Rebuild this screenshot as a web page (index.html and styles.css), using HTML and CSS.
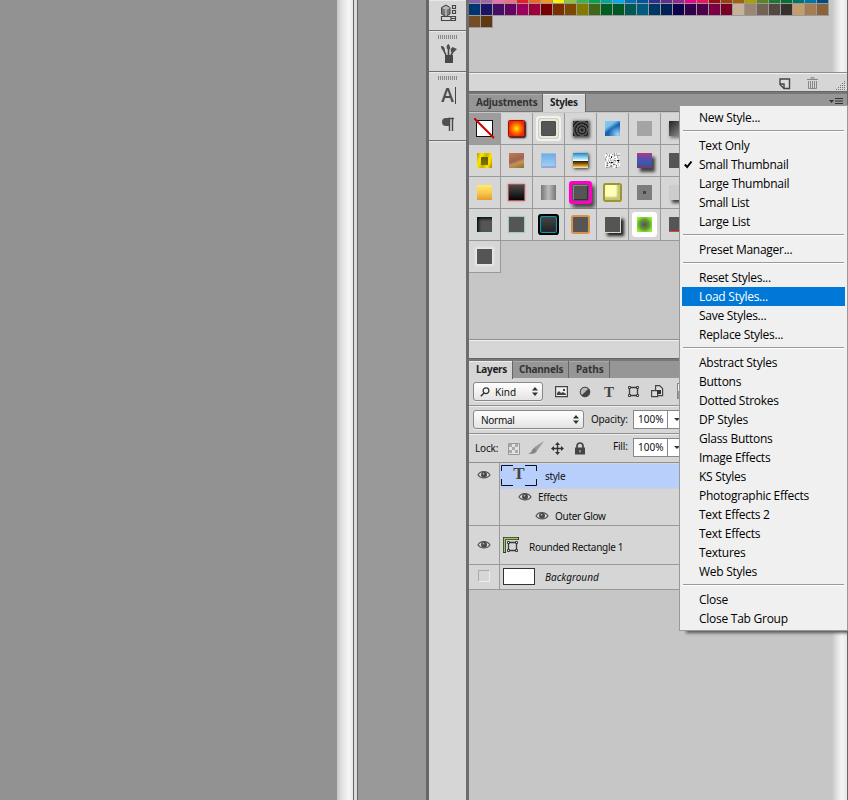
FILE: index.html
```html
<!DOCTYPE html>
<html lang="en">
<head>
<meta charset="utf-8">
<title>Styles panel</title>
<link rel="stylesheet" href="styles.css">
</head>
<body>
<svg class="defs" width="0" height="0">
  <symbol id="eye" viewBox="0 0 14 10"><path d="M1 5C3 1 10 0 13 5C10 9 4 9 1 5Z" fill="#ddd" stroke="#555" stroke-width="1.2"/><circle cx="7" cy="4.700" r="3" fill="#4b4b4b"/><circle cx="6.500" cy="3.800" r=".8" fill="#ccc"/></symbol>
  <symbol id="updown" viewBox="0 0 6 9"><path d="M0 3.500L3 0L6 3.500ZM0 5.500L3 9L6 5.500Z" fill="#333"/></symbol>
  <symbol id="shape" viewBox="0 0 13 13"><path d="M2.500 3V10M10.500 3V10M3 2.500H10M3 10.500H10" fill="none" stroke="#3c3c3c" stroke-width="1.300"/><path d="M1.500 1.500h2v2h-2zM9.500 1.500h2v2h-2zM1.500 9.500h2v2h-2zM9.500 9.500h2v2h-2z" fill="#ddd" stroke="#3c3c3c"/></symbol>
</svg>
<main class="app">
  <section class="canvas"></section>
  <div class="canvas-scroll"></div>
  <div class="canvas-edge"></div>
  <div class="gap"></div>
  <nav class="dock">
    <div class="dock-group first">
      <svg width="18" height="18"><path d="M1.500 3.500L6 1l4 2.500V10L6 12.500 1.500 10Z" fill="#777" stroke="#444"/><path d="M2 4l4 2 4-2-4-2Z" fill="#bbb"/><path d="M6 6v6" stroke="#ddd"/><path d="M12.500 1.500h3v3h-3zM12.500 6.500h3v3h-3zM1.500 12.500h14v4h-14zM11 13v3M11 14.500h4" fill="none" stroke="#444" stroke-width="1.200"/></svg>
    </div>
    <div class="dock-group brushes"><i class="grip"></i>
      <svg width="18" height="20"><path d="M6 11L3 5M8.500 11V4M11 11l3-5" stroke="#444" stroke-width="1.600"/><path d="M1 2c3 0 4 2 4 5C2 6 1 5 1 2ZM7 5c-1-3 0-4 1.500-5 2 2 1.500 4 1.500 5ZM10.500 5l2-2 4.500 2-3 3-3 0Z" fill="#505050"/><path d="M5 11h8v8H5z" fill="#484848"/></svg>
    </div>
    <div class="dock-group type"><i class="grip"></i>
      <div class="char">A</div>
      <svg width="14" height="15" class="para"><path d="M7 1.500H13M8.500 1v13M11.500 1v13" stroke="#484848" stroke-width="1.400" fill="none"/><path d="M8 1H5a4 4 0 0 0 0 8h3Z" fill="#505050"/></svg>
    </div>
    <div class="dock-rest"></div>
  </nav>
  <section class="panels">
    <div class="swatches">
      <div class="swatch-grid" id="swatches"></div>
      <div class="vscroll"></div>
    </div>
    <div class="panel-foot">
      <svg width="12" height="12" class="new"><path d="M1 1h9.500v9.500H5L1 6.500Z" fill="#ddd" stroke="#444" stroke-width="1.400"/><path d="M1 6h4v4" fill="none" stroke="#444" stroke-width="1.400"/></svg>
      <svg width="12" height="12" class="trash"><path d="M0 2.500h11M4 2V.7h3V2" fill="none" stroke="#888"/><path d="M1.500 4v7.500h8V4M3.500 4v7M5.500 4v7M7.500 4v7" fill="none" stroke="#888"/></svg>
      <svg width="10" height="10" class="resize"><path d="M8 .5h1M6 2.500h3M4 4.500h5M2 6.500h7M0 8.500h9" stroke="#777" stroke-dasharray="1 1"/></svg>
    </div>
    <div class="tabs styles-tabs">
      <span class="tab adjustments">Adjustments</span><span class="tab on styles-tab">Styles</span>
      <svg class="flyout" width="14" height="7"><path d="M0 2h5L2.500 5Z" fill="#333"/><path d="M6 .5h8M6 3h8M6 5.500h8" stroke="#333"/></svg>
    </div>
    <div class="styles-body">
      <div class="style-grid">
        <div class="cell picked"><i class="none"><svg width="21" height="21"><path d="M0 0L20 20" stroke="#d00000" stroke-width="2"/></svg></i></div>
        <div class="cell"><i class="t fire"></i></div>
        <div class="cell"><i class="t halo"></i></div>
        <div class="cell"><i class="t rings"></i></div>
        <div class="cell"><i class="t bluegem"></i></div>
        <div class="cell"><i class="t light"></i></div>
        <div class="cell"><i class="t darkfade"></i></div>
        <div class="cell"><i class="t gold"></i></div>
        <div class="cell"><i class="t rust"></i></div>
        <div class="cell"><i class="t sky"></i></div>
        <div class="cell"><i class="t chrome"></i></div>
        <div class="cell"><i class="t noise"><svg width="15" height="15"><filter id="n"><feTurbulence type="fractalNoise" baseFrequency=".55" numOctaves="2" seed="3"/><feColorMatrix values="3 0 0 0 -.8 3 0 0 0 -.8 3 0 0 0 -.8 0 0 0 0 1"/></filter><rect width="15" height="15" filter="url(#n)"/></svg></i></div>
        <div class="cell"><i class="t dusk"></i></div>
        <div class="cell"><i class="t"></i></div>
        <div class="cell"><i class="t amber"></i></div>
        <div class="cell"><i class="t ember"></i></div>
        <div class="cell"><i class="t steel"></i></div>
        <div class="cell"><i class="t magenta"></i></div>
        <div class="cell"><i class="t cream"></i></div>
        <div class="cell"><i class="t dot"></i></div>
        <div class="cell"><i class="t pale"></i></div>
        <div class="cell"><i class="t inset"></i></div>
        <div class="cell"><i class="t aqua"></i></div>
        <div class="cell"><i class="t neon"></i></div>
        <div class="cell"><i class="t orange"></i></div>
        <div class="cell"><i class="t drop"></i></div>
        <div class="cell"><i class="t green"></i></div>
        <div class="cell"><i class="t redline"></i></div>
        <div class="cell last"><i class="t glow"></i></div>
      </div>
    </div>
    <div class="panel-foot plain"></div>
    <div class="tabs layer-tabs">
      <span class="tab on layers-tab">Layers</span><span class="tab channels">Channels</span><span class="tab paths">Paths</span>
    </div>
    <div class="bar filter">
      <div class="select kind"><svg width="10" height="10"><circle cx="6" cy="3.700" r="2.900" fill="none" stroke="#333" stroke-width="1.300"/><path d="M4 6L.8 9.200" stroke="#333" stroke-width="1.500"/></svg><span>Kind</span><svg class="ud" width="6" height="9"><use href="#updown"/></svg></div>
      <div class="filter-icons">
        <svg width="13" height="12"><path d="M.6.6h11.800v10H.6z" fill="#eee" stroke="#444" stroke-width="1.200"/><path d="M2 9V7l2-2 2 2 2-1 3 2v1ZM8 3h2v2H8z" fill="#444"/></svg>
        <svg width="12" height="12"><circle cx="6" cy="6" r="5" fill="#444"/><path d="M2.700 9.300A4.600 4.600 0 0 1 9.300 2.700Z" fill="#bbb"/><circle cx="6" cy="6" r="4.800" fill="none" stroke="#444"/></svg>
        <b class="tee">T</b>
        <svg width="13" height="13"><use href="#shape"/></svg>
        <svg width="13" height="13"><path d="M4.600.6h4l3 3v7h-7z" fill="#ddd" stroke="#444" stroke-width="1.200"/><path d="M.6 5.600h6v6h-6z" fill="#ddd" stroke="#444" stroke-width="1.200"/><path d="M6 5h4v4H6z" fill="#333"/></svg>
      </div>
      <i class="toggle"></i>
    </div>
    <div class="bar blend">
      <div class="select mode"><span>Normal</span><svg class="ud" width="6" height="9"><use href="#updown"/></svg></div>
      <span class="opacity">Opacity:</span><div class="num"><b>100%</b><i></i></div>
    </div>
    <div class="bar lock">
      <span class="lock-label">Lock:</span>
      <svg width="12" height="12" class="checker"><path d="M.5.5h11v11H.5z" fill="#e3e3e3" stroke="#999"/><path d="M1 1h3v3H1zM7 1h3v3H7zM4 4h3v3H4zM1 7h3v3H1zM7 7h3v3H7z" fill="#aaa"/></svg>
      <svg width="16" height="14" class="brush"><path d="M16 0L9.500 9 6 6.500Z" fill="#999"/><path d="M6 7c2 0 3 1 3 3-2 3-5 3-9 3 4-1 3-4 6-6Z" fill="#858585"/></svg>
      <svg width="13" height="13" class="move"><path d="M6.500 2v9M2 6.500h9" stroke="#333" stroke-width="1.300"/><path d="M6.500 0L9 3H4ZM6.500 13L9 10H4ZM0 6.500L3 4v5ZM13 6.500L10 4v5Z" fill="#333"/></svg>
      <svg width="10" height="13" class="padlock"><path d="M2 6V4a3 3 0 0 1 6 0v2" fill="none" stroke="#444" stroke-width="1.700"/><path d="M0 5.500h10v7H0z" fill="#444"/><path d="M4.500 8h1v2.500h-1z" fill="#ccc"/></svg>
      <span class="fill">Fill:</span><div class="num"><b>100%</b><i></i></div>
    </div>
    <div class="layers">
      <div class="layer text-layer">
        <div class="vis"><svg width="14" height="10"><use href="#eye"/></svg></div>
        <div class="info">
          <div class="title"><div class="text-thumb"><b>T</b><svg width="36" height="21"><path d="M.5 6V.5H12M24 .5h11.500V6M35.500 14v6.500H24M12 20.500H.5V14" fill="none" stroke="#111"/></svg></div><span>style</span></div>
          <div class="fx effects"><svg width="14" height="10"><use href="#eye"/></svg><span>Effects</span></div>
          <div class="fx outer"><svg width="14" height="10"><use href="#eye"/></svg><span>Outer Glow</span></div>
        </div>
      </div>
      <div class="layer rect-layer">
        <div class="vis"><svg width="14" height="10"><use href="#eye"/></svg></div>
        <div class="info"><svg width="17" height="17"><path d="M1.500 16V1.500H16" fill="none" stroke="#333" stroke-width="3"/><path d="M1.500 15V1.500H15" fill="none" stroke="#9ccc5a" stroke-width="1.400"/><g transform="translate(3 3)"><use href="#shape" width="13" height="13"/></g></svg><span>Rounded Rectangle 1</span></div>
      </div>
      <div class="layer bg-layer">
        <div class="vis"><i></i></div>
        <div class="info"><i class="white"></i><em>Background</em></div>
      </div>
      <div class="layers-rest"><div class="vscroll"></div></div>
    </div>
  </section>
</main>
<div class="menu">
  <div>New Style...</div>
  <hr>
  <div>Text Only</div>
  <div class="checked"><svg width="9" height="9"><path d="M.8 4.500L3.200 7 7.500 1.500" fill="none" stroke="#000" stroke-width="2"/></svg>Small Thumbnail</div>
  <div>Large Thumbnail</div>
  <div>Small List</div>
  <div>Large List</div>
  <hr>
  <div>Preset Manager...</div>
  <hr>
  <div>Reset Styles...</div>
  <div class="hot">Load Styles...</div>
  <div>Save Styles...</div>
  <div>Replace Styles...</div>
  <hr>
  <div>Abstract Styles</div>
  <div>Buttons</div>
  <div>Dotted Strokes</div>
  <div>DP Styles</div>
  <div>Glass Buttons</div>
  <div>Image Effects</div>
  <div>KS Styles</div>
  <div>Photographic Effects</div>
  <div>Text Effects 2</div>
  <div>Text Effects</div>
  <div>Textures</div>
  <div>Web Styles</div>
  <hr>
  <div>Close</div>
  <div>Close Tab Group</div>
</div>
<script src="script.js"></script>
</body>
</html>
```
FILE: styles.css
```css
* { box-sizing: border-box; }
body { margin: 0; width: 848px; height: 800px; overflow: hidden; position: relative; font: 10px/12px "Noto Sans", sans-serif; color: #111; }
svg { display: block; flex: none; }
.defs { position: absolute; }
i { display: block; font-style: normal; }
.app { display: flex; height: 800px; background: #666; }
.canvas { width: 337px; background: #929292; }
.canvas-scroll { width: 16px; background: linear-gradient(90deg, #c8c8c8, #e4e4e4 35%, #f6f6f6 75%, #e8e8e8); }
.canvas-edge { width: 5px; background: #dcdcdc; border: solid #666; border-width: 0 1px; }
.gap { width: 68px; background: #999; }

.dock { width: 40px; border-left: 3px solid #676767; display: flex; flex-direction: column; background: #d6d6d6; }
.dock-group { border-bottom: 1px solid #707070; box-shadow: inset 0 1px #e9e9e9; display: flex; flex-direction: column; align-items: center; }
.first { height: 31px; padding: 4px 0 0 2px; }
.brushes { height: 41px; padding-top: 4px; }
.type { height: 69px; padding-top: 4px; }
.dock-rest { flex: 1; box-shadow: inset 0 1px #e9e9e9; }
.grip { width: 20px; height: 4px; background: repeating-linear-gradient(90deg, #888 0 1px, #d6d6d6 1px 2px); }
.brushes svg { margin: 5px 0 0 2px; }
.char { font: 600 19px/17px "Open Sans", sans-serif; color: #4b4b4b; border-right: 1px solid #444; height: 17px; margin: 7px 0 0 2px; padding-right: 1px; }
.para { margin: 13px 0 0; }

.panels { width: 382px; border-left: 3px solid #6d6d6d; border-right: 1px solid #666; display: flex; flex-direction: column; background: #d6d6d6; }
.panels > * { flex: none; }
.swatches { height: 72px; background: #c6c6c6; display: flex; justify-content: space-between; }
.swatch-grid { display: grid; grid-template-columns: repeat(30, 12px); grid-template-rows: 4px 12px 12px; align-content: start; }
.swatch-grid i { border: solid #999; border-width: 0 1px 1px 0; }
.vscroll { width: 15px; background: linear-gradient(90deg, #c6c6c6, #e2e2e2 35%, #f5f5f5 65%, #e8e8e8); }
.panel-foot { height: 20px; border-top: 1px solid #8e8e8e; border-bottom: 1px solid #666; box-shadow: inset 0 1px #f1f1f1; display: flex; }
.new { margin: 5px 0 0 310px; }
.trash { margin: 4px 0 0 16px; }
.resize { margin: 8px 0 0 17px; }
.tabs { height: 20px; border-top: 2px solid #777; border-bottom: 1px solid #777; background: #969696; display: flex; font: 700 10px/16px "Noto Sans", sans-serif; color: #333; letter-spacing: -.1px; }
.tab { border-right: 1px solid #666; height: 17px; padding-left: 7px; box-shadow: inset 0 1px #aaa; white-space: nowrap; }
.tab.on { background: #d6d6d6; height: 18px; color: #222; box-shadow: inset 0 1px #eee; }
.adjustments { width: 74px; letter-spacing: -.2px; }
.styles-tab { width: 43px; letter-spacing: -.3px; }
.flyout { margin: 4px 4px 0 auto; }
.styles-body { height: 227px; background: #c6c6c6; padding-top: 1px; }
.style-grid { display: grid; grid-template-columns: repeat(7, 32px); grid-auto-rows: 32px; }
.cell { background: #d6d6d6; border: solid #999; border-width: 0 1px 1px 0; display: flex; align-items: center; justify-content: center; }
.picked { background: #9d9d9d; }
.t { width: 15px; height: 15px; background: #555; }
.none { width: 17px; height: 17px; background: #fff; border: 1px solid #111; position: relative; }
.none svg { position: absolute; left: -3px; top: -3px; }
.fire { border-radius: 1px; background: radial-gradient(circle, #fff000, #ff9000 30%, #f02800 75%); box-shadow: 0 0 0 1px #911, 1px 1px 2px 1px #000; }
.halo { border: 1px solid #4c4c4c; border-radius: 1px; box-shadow: 0 0 0 2px #e8e8e0, 0 0 0 3px #cdcdc3, 0 0 1px 5px #f4f4ea; }
.rings { background: repeating-radial-gradient(circle at 60% 60%, #222 0 1px, #555 2px 3px), #333; box-shadow: 1px 1px 3px 1px #444; }
.bluegem { background: radial-gradient(circle at 85% 90%, #9ad8ff, transparent 50%), linear-gradient(145deg, #8acbf0, #7ac0e8 30%, #1660b0 50%, #1c69b8); }
.light { background: #a4a4a4; }
.darkfade { background: linear-gradient(135deg, #222, #999); box-shadow: 1px 2px 3px #777; }
.gold { background: linear-gradient(#655f00, #7c7200) center/7px 8px no-repeat, linear-gradient(110deg, #b99700, #ffe900 25%, #c6b200 50%, #ffe700 75%, #a98300); }
.rust { background: linear-gradient(160deg, #c47c50, #9c6550 48%, #cc9055 65%, #777733); }
.sky { background: linear-gradient(#69abe4, #a6d4f8); box-shadow: inset 1px 1px #8fbfe9, inset -1px -2px #9aa5df; }
.chrome { background: linear-gradient(#1688cc, #eaffff 50%, #332000 56%, #ba8018 80%, #fff0b0); box-shadow: 1px 1px 3px #333; }
.noise { overflow: hidden; }
.dusk { background: linear-gradient(#b03b75, #604cb0 35%, #315da8 75%, #8a2d70); box-shadow: 3px 4px 3px #444; }
.amber { background: linear-gradient(#ffeb69, #f9cb4e 50%, #e89832); }
.ember { background: linear-gradient(#4b4b4b, #050505); box-shadow: 0 0 0 1px #a55, 0 0 2px 1px #c77; }
.steel { background: linear-gradient(90deg, #777, #bbb 50%, #777); }
.magenta { border-radius: 1px; background: #555; box-shadow: inset 1px 1px #888, inset -1px -1px #333, 0 0 0 1px #555, 0 0 0 4px #ff00c4, 3px 4px 4px 4px #444; }
.cream { background: #ffffb8; box-shadow: inset -3px -3px 2px #c6c478, 0 0 0 2px #9a9632; border-radius: 1px; }
.dot { background: linear-gradient(#444, #444) center/3px 3px no-repeat #7d7d7d; }
.pale { background: #ccc; box-shadow: 3px 3px 3px #444; }
.inset { box-shadow: inset 2px 2px 3px #111, 0 0 2px 2px #ccdad8; }
.aqua { box-shadow: 0 0 1px 1px #9fc9c2; }
.neon { border-radius: 1px; background: linear-gradient(#444, #222); box-shadow: inset 0 0 1px #008ba1, 0 0 0 1px #0799b0, 0 0 0 3px #000; }
.orange { border-radius: 1px; box-shadow: 0 0 0 2px #d9924b; }
.drop { box-shadow: 0 0 0 1px #d6ddc4, 3px 3px 3px 1px #222; }
.green { background: radial-gradient(#555, #66943a 45%, #89f125 80%); box-shadow: 0 0 0 5px #fff; border-radius: 1px; }
.redline { border-bottom: 1px solid #f33; }
.glow { box-shadow: 0 0 2px 2px #e8e8e8; }
.plain { height: 20px; }
.layers-tab { width: 44px; letter-spacing: -.3px; }
.channels { width: 56px; padding-left: 6px; letter-spacing: -.2px; }
.paths { width: 41px; }
.layer-tabs { height: 19px; border-bottom: 0; }

.bar { display: flex; border-bottom: 1px solid #909090; box-shadow: inset 0 1px #eee; white-space: nowrap; }
.filter { height: 28px; box-shadow: none; }
.blend { height: 28px; }
.lock { height: 29px; }
.select { border: 1px solid #888; border-radius: 3px; background: linear-gradient(#fff, #e4e4e4); display: flex; align-items: center; box-shadow: 0 1px #eee; }
.ud { margin-left: auto; margin-right: 4px; }
.kind { width: 70px; height: 19px; margin: 4px 0 0 4px; padding-left: 6px; }
.kind span { margin-left: 5px; }
.mode { width: 111px; height: 19px; margin: 4px 0 0 4px; padding-left: 7px; letter-spacing: -.3px; }
.filter-icons { display: grid; grid-template-columns: repeat(5, 24px); justify-items: center; align-items: center; margin-left: 6px; height: 27px; }
.tee { font: 700 15px/16px "Liberation Serif", serif; color: #444; }
.toggle { width: 8px; height: 16px; margin: 5px 0 0 8px; background: linear-gradient(#eee 50%, #999 50%); border: 1px solid #888; }
.opacity { margin: 7px 0 0 7px; width: 42px; letter-spacing: -.2px; }
.num { width: 60px; height: 19px; margin-top: 4px; border: 1px solid #888; background: #fff; display: flex; }
.num b { width: 34px; padding-left: 4px; font-weight: 400; line-height: 17px; border-right: 1px solid #888; }
.num i { width: 0; height: 0; border: solid transparent; border-width: 3px 3px 0; border-top-color: #333; margin: 7px 0 0 6px; }
.lock-label { margin: 8px 0 0 6px; width: 33px; letter-spacing: -.2px; }
.checker { margin: 9px 0 0; }
.brush { margin: 7px 0 0 8px; }
.move { margin: 8px 0 0 7px; }
.padlock { margin: 8px 0 0 11px; }
.fill { margin: 6px 0 0 28px; width: 20px; letter-spacing: -.2px; }
.layers { height: 338px; display: flex; flex-direction: column; background: #c6c6c6; }
.layer { display: flex; background: #d6d6d6; border-bottom: 1px solid #999; }
.layer span { letter-spacing: -.3px; }
.vis { width: 31px; border-right: 1px solid #999; display: flex; justify-content: center; }
.info { flex: 1; }
.text-layer { height: 63px; }
.text-layer .vis { padding-top: 7px; }
.title { height: 25px; margin-top: 1px; background: #b8cefb; display: flex; border-bottom: 1px solid #c9cfdd; }
.title span { margin: 6px 0 0 8px; }
.text-thumb { width: 36px; height: 21px; margin: 1px 0 0 1px; position: relative; text-align: center; }
.text-thumb b { font: 700 17px/18px "Liberation Serif", serif; color: #444; }
.text-thumb svg { position: absolute; inset: 0; }
.fx { display: flex; align-items: center; height: 16px; }
.effects { padding-left: 18px; }
.outer { padding-left: 35px; height: 21px; }
.fx span { margin-left: 6px; }
.rect-layer { height: 39px; }
.rect-layer .vis { padding-top: 14px; }
.rect-layer .info { display: flex; padding: 11px 0 0 3px; }
.rect-layer span { margin: 4px 0 0 9px; }
.bg-layer { height: 25px; }
.bg-layer .vis i { width: 12px; height: 12px; margin-top: 5px; border: 1px solid; border-color: #aaa #eee #eee #aaa; }
.bg-layer .info { display: flex; }
.white { width: 32px; height: 17px; margin: 3px 0 0 3px; border: 1px solid #333; background: #fff; }
.bg-layer em { margin: 6px 0 0 10px; }
.layers-rest { flex: 1; display: flex; justify-content: flex-end; }

.menu { position: absolute; left: 679px; top: 105px; width: 169px; height: 526px; padding: 2px 2px 0; border: 1px solid #999; background: #f0f0f0; box-shadow: 5px 4px 3px -2px #555; font: 12px/19px "Open Sans", sans-serif; color: #000; }
.menu div { height: 19px; padding-left: 17px; white-space: nowrap; position: relative; letter-spacing: -.26px; }
.menu hr { height: 2px; margin: 3px 1px 4px; border: 0; border-top: 1px solid #999; border-bottom: 1px solid #fff; }
.menu .hot { background: #0078d7; color: #fff; }
.checked svg { position: absolute; left: 2px; top: 5px; }
```
FILE: script.js
```js
// Swatch colours, one string of hex values per row.
const rows = [
  "8560a8 a864a8 f06ea9 f26d7d ed1c24 f26522 f7941d fff200 8dc63f 39b54a 00a651 00a99d 00aeef 0072bc 0054a6 2e3192 662d91 92278f ec008c ed145b 9e0b0f a0410d a36209 aba000 598527 1a7b30 007236 00746b 0076a3 004b80",
  "003471 1b1464 440e62 630460 9e005d 9e0039 790000 7b2e00 7d4900 827b00 406618 005e20 005826 005952 005b7f 003663 002157 0d004c 32004b 4b0049 7b0046 7a0026 c7b299 998675 736357 534741 37302d c69c6d a67c52 8c6239",
  "754c24 603913"
];
const grid = document.getElementById("swatches");
for (const row of rows) {
  for (const hex of row.split(" ")) {
    const cell = document.createElement("i");
    cell.style.background = "#" + hex;
    grid.append(cell);
  }
}
```
